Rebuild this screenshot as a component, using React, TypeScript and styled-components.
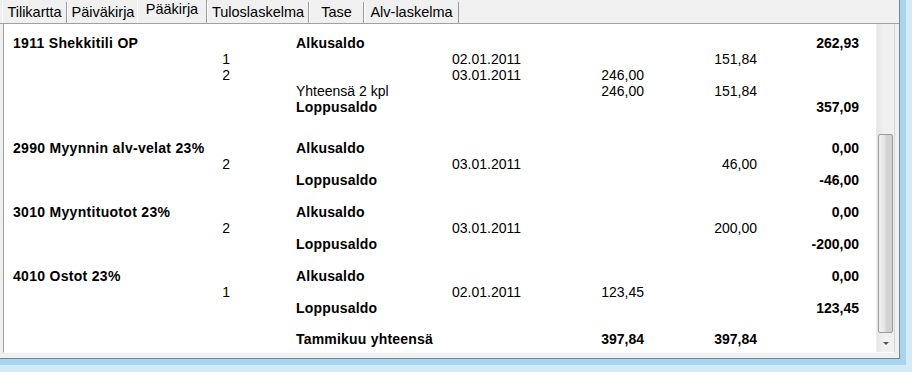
import styled, { createGlobalStyle } from "styled-components";

const GlobalStyle = createGlobalStyle`
  html, body {
    margin: 0;
    padding: 0;
    background: #d3eaf7;
  }
  body {
    font-family: "Liberation Sans", Arial, sans-serif;
    color: #000;
  }
`;

type Entry = { voucher: string; date: string; debit?: string; credit?: string };
type Account = {
    name: string;
    opening: string;
    entries: Entry[];
    total?: { label: string; debit: string; credit: string };
    closing: string;
    gap: number;
};

const accounts: Account[] = [
    {
        name: "1911 Shekkitili OP",
        opening: "262,93",
        entries: [
            { voucher: "1", date: "02.01.2011", credit: "151,84" },
            { voucher: "2", date: "03.01.2011", debit: "246,00" },
        ],
        total: { label: "Yhteensä 2 kpl", debit: "246,00", credit: "151,84" },
        closing: "357,09",
        gap: 0,
    },
    {
        name: "2990 Myynnin alv-velat 23%",
        opening: "0,00",
        entries: [{ voucher: "2", date: "03.01.2011", credit: "46,00" }],
        closing: "-46,00",
        gap: 25,
    },
    {
        name: "3010 Myyntituotot 23%",
        opening: "0,00",
        entries: [{ voucher: "2", date: "03.01.2011", credit: "200,00" }],
        closing: "-200,00",
        gap: 16,
    },
    {
        name: "4010 Ostot 23%",
        opening: "0,00",
        entries: [{ voucher: "1", date: "02.01.2011", debit: "123,45" }],
        closing: "123,45",
        gap: 16,
    },
];

const tabs = [
    { label: "Tilikartta", width: 65 },
    { label: "Päiväkirja", width: 72 },
    { label: "Pääkirja", width: 70, active: true },
    { label: "Tuloslaskelma", width: 102 },
    { label: "Tase", width: 55 },
    { label: "Alv-laskelma", width: 95 },
];

function App() {
    return (
        <>
            <GlobalStyle />
            <OuterFrame>
                <BlueFrame>
                    <Client>
                        <TabStrip>
                            {tabs.map((t) => (
                                <Tab key={t.label} $w={t.width} $active={!!t.active}>
                                    {t.label}
                                </Tab>
                            ))}
                        </TabStrip>
                        <PaneWrap>
                            <Pane>
                                <List>
                                    {accounts.map((a) => (
                                        <Group key={a.name} $gap={a.gap}>
                                            <Row>
                                                <NameCell>{a.name}</NameCell>
                                                <DescCell $bold>Alkusaldo</DescCell>
                                                <Cell />
                                                <Cell />
                                                <Cell />
                                                <AmountCell $bold>{a.opening}</AmountCell>
                                            </Row>
                                            {a.entries.map((e, i) => (
                                                <Row key={i}>
                                                    <VoucherCell>{e.voucher}</VoucherCell>
                                                    <DescCell />
                                                    <Cell>{e.date}</Cell>
                                                    <AmountCell>{e.debit}</AmountCell>
                                                    <AmountCell>{e.credit}</AmountCell>
                                                    <Cell />
                                                </Row>
                                            ))}
                                            {a.total && (
                                                <Row>
                                                    <Cell />
                                                    <DescCell>{a.total.label}</DescCell>
                                                    <Cell />
                                                    <AmountCell>{a.total.debit}</AmountCell>
                                                    <AmountCell>{a.total.credit}</AmountCell>
                                                    <Cell />
                                                </Row>
                                            )}
                                            <Row>
                                                <Cell />
                                                <DescCell $bold>Loppusaldo</DescCell>
                                                <Cell />
                                                <Cell />
                                                <Cell />
                                                <AmountCell $bold>{a.closing}</AmountCell>
                                            </Row>
                                        </Group>
                                    ))}
                                    <Group $gap={15}>
                                        <Row>
                                            <Cell />
                                            <DescCell $bold>Tammikuu yhteensä</DescCell>
                                            <Cell />
                                            <AmountCell $bold>397,84</AmountCell>
                                            <AmountCell $bold>397,84</AmountCell>
                                            <Cell />
                                        </Row>
                                    </Group>
                                </List>
                                <ScrollBar>
                                    <Track>
                                        <Thumb />
                                    </Track>
                                    <ArrowButton>
                                        <DownArrow />
                                    </ArrowButton>
                                </ScrollBar>
                            </Pane>
                        </PaneWrap>
                    </Client>
                </BlueFrame>
            </OuterFrame>
        </>
    );
}

export default App;

const OuterFrame = styled.div`
    width: 912px;
    height: 372px;
    box-sizing: border-box;
    padding: 0 6px 7px 0;
    background: #d3eaf7;
`;

const BlueFrame = styled.div`
    height: 100%;
    box-sizing: border-box;
    padding: 0 6px 6px 0;
    background: #a8d4ee;
`;

const Client = styled.div`
    display: flex;
    flex-direction: column;
    height: 100%;
    box-sizing: border-box;
    background: #f0f0f0;
    border-right: 1px solid #6f8599;
    border-bottom: 1px solid #6f8599;
`;

const TabStrip = styled.div`
    display: flex;
    align-items: flex-end;
    height: 23px;
    padding-left: 2px;
    border-bottom: 1px solid #a0a0a0;
`;

const Tab = styled.div<{ $w: number; $active: boolean }>`
    box-sizing: border-box;
    width: ${({ $w }) => $w}px;
    height: ${({ $active }) => ($active ? 23 : 21)}px;
    margin-left: ${({ $active }) => ($active ? -2 : 0)}px;
    padding-top: ${({ $active }) => ($active ? 0 : 1)}px;
    border-left: 1px solid #ffffff;
    border-right: 1px solid #9a9a9a;
    background: #f0f0f0;
    font-size: 14.5px;
    line-height: 18px;
    text-align: center;
    white-space: nowrap;
    position: relative;
    z-index: ${({ $active }) => ($active ? 1 : 0)};
`;

const PaneWrap = styled.div`
    flex: 1;
    display: flex;
    padding: 0 4px 5px 3px;
`;

const Pane = styled.div`
    flex: 1;
    display: flex;
    border-left: 1px solid #a0a0a0;
    border-right: 1px solid #d6d6d6;
    border-bottom: 1px solid #fafafa;
    background: #ffffff;
`;

const List = styled.div`
    flex: 1;
    overflow: hidden;
    padding: 11px 0 0 9px;
    font-size: 14px;
`;

const Group = styled.div<{ $gap: number }>`
    margin-top: ${({ $gap }) => $gap}px;
`;

const Row = styled.div`
    display: grid;
    grid-template-columns: 217px 222px 71px 121px 113px 102px;
    height: 16px;
    line-height: 16px;
    white-space: nowrap;
`;

const Cell = styled.div<{ $bold?: boolean }>`
    font-weight: ${({ $bold }) => ($bold ? 700 : 400)};
`;

const NameCell = styled(Cell)`
    font-weight: 700;
    letter-spacing: 0.3px;
`;

const VoucherCell = styled(Cell)`
    text-align: right;
`;

const DescCell = styled(Cell)`
    padding-left: 66px;
    letter-spacing: ${({ $bold }) => ($bold ? 0.2 : 0)}px;
`;

const AmountCell = styled(Cell)`
    text-align: right;
`;

const ScrollBar = styled.div`
    display: flex;
    flex-direction: column;
    width: 17px;
    background: linear-gradient(to right, #e6e6e6, #f0f0f0 40%, #f0f0f0);
    border-left: 1px solid #ececec;
`;

const Track = styled.div`
    flex: 1;
    padding-top: 110px;
`;

const Thumb = styled.div`
    box-sizing: border-box;
    height: 199px;
    margin: 0 1px;
    border: 1px solid #9a9a9a;
    border-radius: 2px;
    background: linear-gradient(to right, #f2f2f2, #e4e4e4 45%, #d4d4d4 55%, #cfcfcf);
`;

const ArrowButton = styled.div`
    display: flex;
    align-items: center;
    justify-content: center;
    height: 17px;
`;

const DownArrow = styled.div`
    width: 0;
    height: 0;
    border-left: 3px solid transparent;
    border-right: 3px solid transparent;
    border-top: 3px solid #505050;
`;
